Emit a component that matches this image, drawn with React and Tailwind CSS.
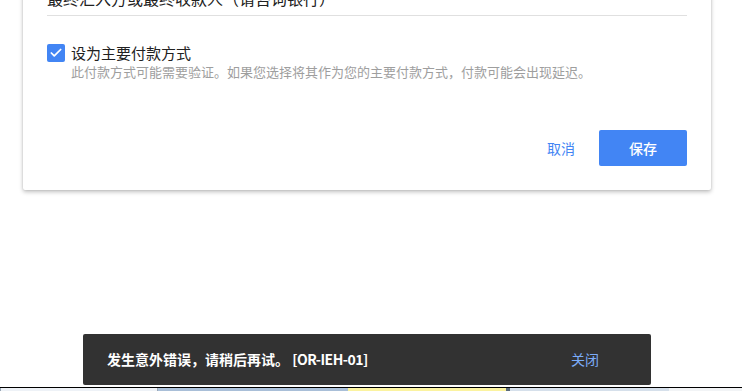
import { Check } from 'lucide-react';

const font = { fontFamily: '"Noto Sans CJK SC", "Noto Sans", sans-serif' };

// 底部任务栏残留
const TaskStrip = () => (
  <div className="mt-[2px] border-t border-black flex h-[4px]">
    <div className="w-[158px] bg-[#eef2f7] border-x border-[#9aa7b5]" />
    <div className="w-[190px] bg-[#a9bfd8]" />
    <div className="w-[158px] bg-[#fbf3a0]" />
    <div className="w-[4px] bg-[#5a6a7a]" />
    <div className="w-[159px] bg-[#d6e0eb]" />
    <div className="flex-1 bg-[#f2f4f6]" />
  </div>
);

export default function App() {
  return (
    <div className="h-[391px] overflow-hidden bg-white [text-spacing-trim:space-all]" style={font}>
      {/* 卡片 */}
      <div className="mx-[23px] w-[688px] -mt-[40px] bg-white rounded-[2px] shadow-[0_2px_4px_rgba(0,0,0,0.25),0_0_2px_rgba(0,0,0,0.12)] px-6 pb-6">
        <div className="pt-[26px] pb-[5px] border-b border-[#e0e0e0] text-[16px] leading-6 text-[#212121]">
          最终汇入方或最终收款人（请咨询银行）
        </div>

        <div className="mt-[27px] flex items-start gap-[6px]">
          <div className="w-[18px] h-[18px] mt-[1px] rounded-[2px] bg-[#4285f4] flex items-center justify-center shrink-0">
            <Check size={14} strokeWidth={3} className="text-white" />
          </div>
          <div>
            <p className="text-[15px] leading-5 text-[#212121]">设为主要付款方式</p>
            <p className="text-[13px] leading-[18px] text-[#9e9e9e]">
              此付款方式可能需要验证。如果您选择将其作为您的主要付款方式，付款可能会出现延迟。
            </p>
          </div>
        </div>

        <div className="mt-[49px] flex justify-end items-center">
          <button className="text-[14px] text-[#4285f4] mr-6">取消</button>
          <button className="w-[88px] h-[36px] rounded-[2px] bg-[#4285f4] text-white text-[14px] font-medium">
            保存
          </button>
        </div>
      </div>

      {/* 提示条 */}
      <div className="ml-[83px] mt-[144px] w-[568px] h-[51px] bg-[#323232] rounded-[2px] flex items-center justify-between pl-6 pr-[52px]">
        <span className="text-[14px] font-bold text-white">
          发生意外错误，请稍后再试。 <span className="tracking-[-0.5px]">[OR-IEH-01]</span>
        </span>
        <button className="text-[14px] text-[#7cacf8]">关闭</button>
      </div>

      <TaskStrip />
    </div>
  );
}
